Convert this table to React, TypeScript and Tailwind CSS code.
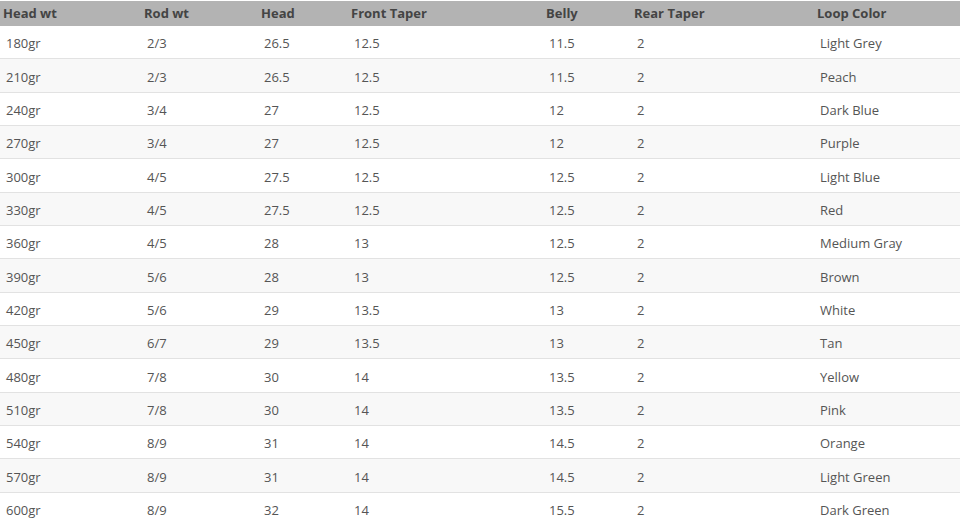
const rows = [
  ["180gr", "2/3", "26.5", "12.5", "11.5", "2", "Light Grey"],
  ["210gr", "2/3", "26.5", "12.5", "11.5", "2", "Peach"],
  ["240gr", "3/4", "27", "12.5", "12", "2", "Dark Blue"],
  ["270gr", "3/4", "27", "12.5", "12", "2", "Purple"],
  ["300gr", "4/5", "27.5", "12.5", "12.5", "2", "Light Blue"],
  ["330gr", "4/5", "27.5", "12.5", "12.5", "2", "Red"],
  ["360gr", "4/5", "28", "13", "12.5", "2", "Medium Gray"],
  ["390gr", "5/6", "28", "13", "12.5", "2", "Brown"],
  ["420gr", "5/6", "29", "13.5", "13", "2", "White"],
  ["450gr", "6/7", "29", "13.5", "13", "2", "Tan"],
  ["480gr", "7/8", "30", "14", "13.5", "2", "Yellow"],
  ["510gr", "7/8", "30", "14", "13.5", "2", "Pink"],
  ["540gr", "8/9", "31", "14", "14.5", "2", "Orange"],
  ["570gr", "8/9", "31", "14", "14.5", "2", "Light Green"],
  ["600gr", "8/9", "32", "14", "15.5", "2", "Dark Green"],
]

const headers = ["Head wt", "Rod wt", "Head", "Front Taper", "Belly", "Rear Taper", "Loop Color"]

// column widths read off the screenshot
const cols = "grid grid-cols-[141px_117px_90px_195px_88px_183px_1fr]"

export default function App() {
  return (
    <div className="w-[960px] h-[525px] overflow-hidden bg-white font-['Open_Sans',sans-serif] text-[13px]">
      <div className="pt-px">
        {/* Header row */}
        <div className={`${cols} h-[25px] items-center bg-[#b3b3b3] text-[#444] font-bold`}>
          {headers.map((h) => (
            <div key={h} className="pl-[3px] pt-px">{h}</div>
          ))}
        </div>

        {/* Body rows */}
        {rows.map((r, i) => (
          <div
            key={r[0]}
            className={`${cols} h-[33.33px] items-center border-b border-[#e2e2e2] text-[#555] ${
              i % 2 === 1 ? "bg-[#f8f8f8]" : "bg-white"
            }`}
          >
            {r.map((c, j) => (
              <div key={j} className="pl-[6px] pt-[4px]">{c}</div>
            ))}
          </div>
        ))}
      </div>
    </div>
  )
}
